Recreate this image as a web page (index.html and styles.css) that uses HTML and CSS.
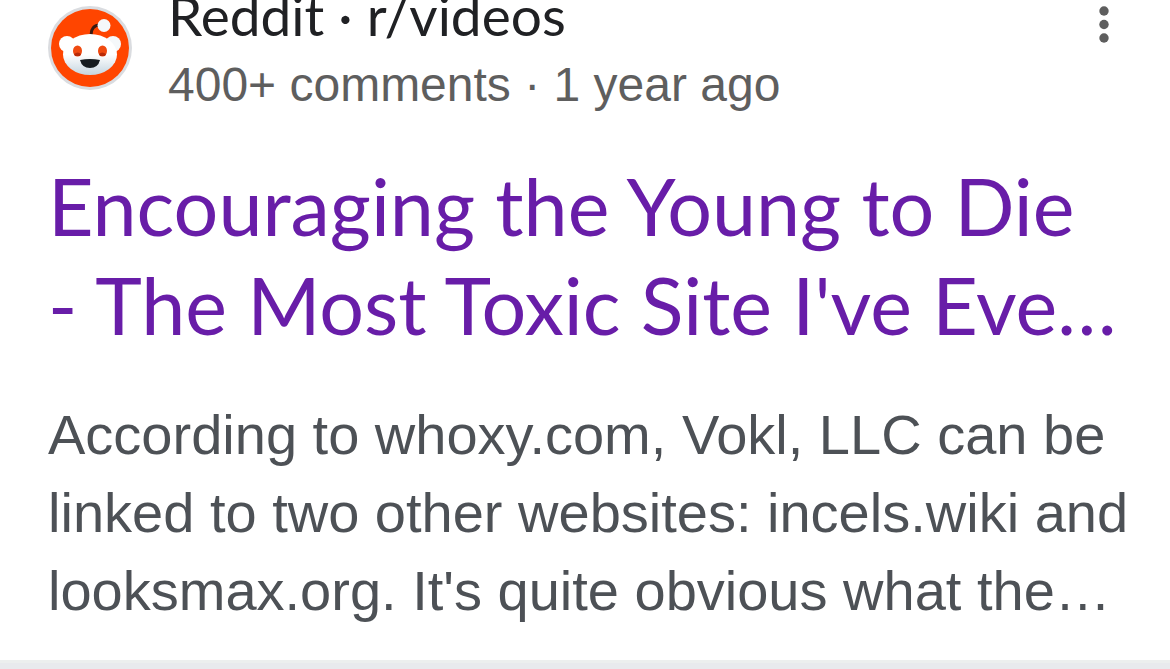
FILE: index.html
```html
<!DOCTYPE html>
<html lang="en">

<head>
    <meta charset="UTF-8">
    <meta name="viewport" content="width=device-width, initial-scale=1.0">
    <title>Search result</title>
    <link rel="stylesheet" href="styles.css">
</head>

<body>

    <article class="result">
        <!-- Source -->
        <header class="source">
            <svg class="avatar" viewBox="0 0 84 84" aria-hidden="true">
                <defs>
                    <linearGradient id="face" x1="0" y1="0" x2="0" y2="1">
                        <stop offset="0.5" stop-color="#ffffff" />
                        <stop offset="1" stop-color="#c5d5df" />
                    </linearGradient>
                </defs>
                <circle cx="42" cy="42" r="42" fill="#dadce0" />
                <circle cx="42" cy="42" r="39" fill="#ff4500" />
                <path d="M43 29 C43 23 46 19 52 19" fill="none" stroke="#3a1a10" stroke-width="3" />
                <circle cx="56" cy="19.500" r="6.500" fill="#f5f8fa" />
                <circle cx="19" cy="38" r="8" fill="#ffffff" />
                <circle cx="65" cy="38" r="8" fill="#f5f8fa" />
                <ellipse cx="42" cy="48.500" rx="27" ry="20.500" fill="url(#face)" />
                <ellipse cx="29.500" cy="45" rx="4.500" ry="5.500" fill="#f04a10" />
                <ellipse cx="54.500" cy="45" rx="4.500" ry="5.500" fill="#f04a10" />
                <path d="M26 48 Q30 45 33 48 L32 50 H27 Z M51 48 Q54 45 58 48 L57 50 H52 Z" fill="#b92b08" />
                <path d="M32 54 Q42 52 52 54 Q50 62 42 62 Q34 62 32 54 Z" fill="#151c20" />
            </svg>
            <div class="source-text">
                <div class="site">Reddit · r/videos</div>
                <div class="meta">400+ comments · 1 year ago</div>
            </div>
            <button class="menu" type="button" aria-label="More options">
                <svg viewBox="0 0 10 38" width="10" height="38" aria-hidden="true">
                    <circle cx="5" cy="5" r="4.700" fill="#5e5e5e" />
                    <circle cx="5" cy="18.500" r="4.700" fill="#5e5e5e" />
                    <circle cx="5" cy="32" r="4.700" fill="#5e5e5e" />
                </svg>
            </button>
        </header>

        <h3 class="title"><a href="#">Encouraging the Young to Die<br>- The Most Toxic Site I've Eve…</a></h3>

        <p class="snippet">According to whoxy.com, Vokl, LLC can be linked to two other websites: incels.wiki and looksmax.org. It's quite obvious what the…</p>
    </article>

</body>

</html>
```

FILE: styles.css
```css
* {
    margin: 0;
    padding: 0;
    box-sizing: border-box;
}

body {
    background-color: #fff;
    font-family: 'Liberation Sans', Arial, sans-serif;
}

.result {
    padding: 0 48px 33px;
    border-bottom: 6px solid #e8eaed;
    box-shadow: inset 0 -3px #ecefee;
}

/* Source row */
.source {
    display: flex;
    align-items: flex-start;
    padding-top: 6px;
}

.avatar {
    width: 84px;
    height: 84px;
    margin-right: 36px;
}

.source-text {
    flex: 1;
}

.site {
    font-family: Lato, sans-serif;
    font-size: 55px;
    line-height: 18px;
    color: #202124;
}

.meta {
    margin-top: 35px;
    font-size: 48px;
    line-height: 52px;
    color: #5e5e5e;
}

.menu {
    padding: 0 13px;
    border: none;
    background: none;
    cursor: pointer;
}

.menu svg {
    display: block;
}

/* Title and text */
.title {
    margin-top: 45px;
    font-family: Lato, sans-serif;
    font-size: 79px;
    font-weight: 400;
    line-height: 99px;
}

.title a {
    color: #681da8;
    text-decoration: none;
}

.snippet {
    margin: 42px -12px 0 0;
    font-size: 56px;
    line-height: 78px;
    color: #4d5156;
}
```
